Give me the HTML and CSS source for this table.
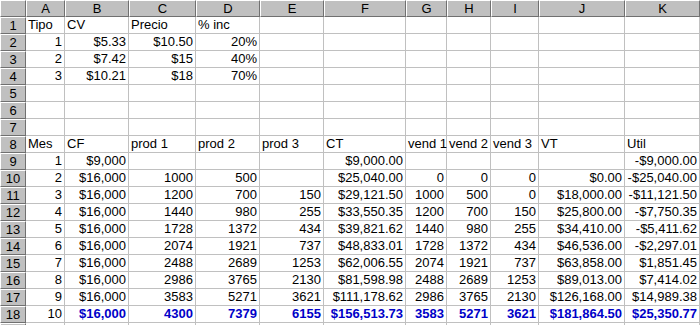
FILE: index.html
```html
<!DOCTYPE html>
<html lang="es">
<head>
<meta charset="utf-8">
<title>Hoja de cálculo</title>
<link rel="stylesheet" href="styles.css">
</head>
<body>
<div class="sheet">
  <div class="row">
    <div class="hd corner"></div><div class="hd">A</div><div class="hd">B</div><div class="hd">C</div><div class="hd">D</div><div class="hd">E</div><div class="hd">F</div><div class="hd">G</div><div class="hd">H</div><div class="hd">I</div><div class="hd">J</div><div class="hd">K</div><div class="hd"></div>
  </div>
  <div class="row">
    <div class="hd">1</div><div class="cell">Tipo</div><div class="cell">CV</div><div class="cell">Precio</div><div class="cell">% inc</div><div class="cell"></div><div class="cell"></div><div class="cell"></div><div class="cell"></div><div class="cell"></div><div class="cell"></div><div class="cell"></div><div class="cell"></div>
  </div>
  <div class="row">
    <div class="hd">2</div><div class="cell num">1</div><div class="cell num">$5.33</div><div class="cell num">$10.50</div><div class="cell num">20%</div><div class="cell"></div><div class="cell"></div><div class="cell"></div><div class="cell"></div><div class="cell"></div><div class="cell"></div><div class="cell"></div><div class="cell"></div>
  </div>
  <div class="row">
    <div class="hd">3</div><div class="cell num">2</div><div class="cell num">$7.42</div><div class="cell num">$15</div><div class="cell num">40%</div><div class="cell"></div><div class="cell"></div><div class="cell"></div><div class="cell"></div><div class="cell"></div><div class="cell"></div><div class="cell"></div><div class="cell"></div>
  </div>
  <div class="row">
    <div class="hd">4</div><div class="cell num">3</div><div class="cell num">$10.21</div><div class="cell num">$18</div><div class="cell num">70%</div><div class="cell"></div><div class="cell"></div><div class="cell"></div><div class="cell"></div><div class="cell"></div><div class="cell"></div><div class="cell"></div><div class="cell"></div>
  </div>
  <div class="row">
    <div class="hd">5</div><div class="cell"></div><div class="cell"></div><div class="cell"></div><div class="cell"></div><div class="cell"></div><div class="cell"></div><div class="cell"></div><div class="cell"></div><div class="cell"></div><div class="cell"></div><div class="cell"></div><div class="cell"></div>
  </div>
  <div class="row">
    <div class="hd">6</div><div class="cell"></div><div class="cell"></div><div class="cell"></div><div class="cell"></div><div class="cell"></div><div class="cell"></div><div class="cell"></div><div class="cell"></div><div class="cell"></div><div class="cell"></div><div class="cell"></div><div class="cell"></div>
  </div>
  <div class="row">
    <div class="hd">7</div><div class="cell"></div><div class="cell"></div><div class="cell"></div><div class="cell"></div><div class="cell"></div><div class="cell"></div><div class="cell"></div><div class="cell"></div><div class="cell"></div><div class="cell"></div><div class="cell"></div><div class="cell"></div>
  </div>
  <div class="row">
    <div class="hd">8</div><div class="cell">Mes</div><div class="cell">CF</div><div class="cell">prod 1</div><div class="cell">prod 2</div><div class="cell">prod 3</div><div class="cell">CT</div><div class="cell">vend 1</div><div class="cell">vend 2</div><div class="cell">vend 3</div><div class="cell">VT</div><div class="cell">Util</div><div class="cell"></div>
  </div>
  <div class="row">
    <div class="hd">9</div><div class="cell num">1</div><div class="cell num">$9,000</div><div class="cell"></div><div class="cell"></div><div class="cell"></div><div class="cell num">$9,000.00</div><div class="cell"></div><div class="cell"></div><div class="cell"></div><div class="cell"></div><div class="cell num">-$9,000.00</div><div class="cell"></div>
  </div>
  <div class="row">
    <div class="hd">10</div><div class="cell num">2</div><div class="cell num">$16,000</div><div class="cell num">1000</div><div class="cell num">500</div><div class="cell"></div><div class="cell num">$25,040.00</div><div class="cell num">0</div><div class="cell num">0</div><div class="cell num">0</div><div class="cell num">$0.00</div><div class="cell num">-$25,040.00</div><div class="cell"></div>
  </div>
  <div class="row">
    <div class="hd">11</div><div class="cell num">3</div><div class="cell num">$16,000</div><div class="cell num">1200</div><div class="cell num">700</div><div class="cell num">150</div><div class="cell num">$29,121.50</div><div class="cell num">1000</div><div class="cell num">500</div><div class="cell num">0</div><div class="cell num">$18,000.00</div><div class="cell num">-$11,121.50</div><div class="cell"></div>
  </div>
  <div class="row">
    <div class="hd">12</div><div class="cell num">4</div><div class="cell num">$16,000</div><div class="cell num">1440</div><div class="cell num">980</div><div class="cell num">255</div><div class="cell num">$33,550.35</div><div class="cell num">1200</div><div class="cell num">700</div><div class="cell num">150</div><div class="cell num">$25,800.00</div><div class="cell num">-$7,750.35</div><div class="cell"></div>
  </div>
  <div class="row">
    <div class="hd">13</div><div class="cell num">5</div><div class="cell num">$16,000</div><div class="cell num">1728</div><div class="cell num">1372</div><div class="cell num">434</div><div class="cell num">$39,821.62</div><div class="cell num">1440</div><div class="cell num">980</div><div class="cell num">255</div><div class="cell num">$34,410.00</div><div class="cell num">-$5,411.62</div><div class="cell"></div>
  </div>
  <div class="row">
    <div class="hd">14</div><div class="cell num">6</div><div class="cell num">$16,000</div><div class="cell num">2074</div><div class="cell num">1921</div><div class="cell num">737</div><div class="cell num">$48,833.01</div><div class="cell num">1728</div><div class="cell num">1372</div><div class="cell num">434</div><div class="cell num">$46,536.00</div><div class="cell num">-$2,297.01</div><div class="cell"></div>
  </div>
  <div class="row">
    <div class="hd">15</div><div class="cell num">7</div><div class="cell num">$16,000</div><div class="cell num">2488</div><div class="cell num">2689</div><div class="cell num">1253</div><div class="cell num">$62,006.55</div><div class="cell num">2074</div><div class="cell num">1921</div><div class="cell num">737</div><div class="cell num">$63,858.00</div><div class="cell num">$1,851.45</div><div class="cell"></div>
  </div>
  <div class="row">
    <div class="hd">16</div><div class="cell num">8</div><div class="cell num">$16,000</div><div class="cell num">2986</div><div class="cell num">3765</div><div class="cell num">2130</div><div class="cell num">$81,598.98</div><div class="cell num">2488</div><div class="cell num">2689</div><div class="cell num">1253</div><div class="cell num">$89,013.00</div><div class="cell num">$7,414.02</div><div class="cell"></div>
  </div>
  <div class="row">
    <div class="hd">17</div><div class="cell num">9</div><div class="cell num">$16,000</div><div class="cell num">3583</div><div class="cell num">5271</div><div class="cell num">3621</div><div class="cell num">$111,178.62</div><div class="cell num">2986</div><div class="cell num">3765</div><div class="cell num">2130</div><div class="cell num">$126,168.00</div><div class="cell num">$14,989.38</div><div class="cell"></div>
  </div>
  <div class="row">
    <div class="hd">18</div><div class="cell num">10</div><div class="cell num total">$16,000</div><div class="cell num total">4300</div><div class="cell num total">7379</div><div class="cell num total">6155</div><div class="cell num total">$156,513.73</div><div class="cell num total">3583</div><div class="cell num total">5271</div><div class="cell num total">3621</div><div class="cell num total">$181,864.50</div><div class="cell num total">$25,350.77</div><div class="cell"></div>
  </div>
  <div class="row">
    <div class="hd"></div><div class="cell"></div><div class="cell"></div><div class="cell"></div><div class="cell"></div><div class="cell"></div><div class="cell"></div><div class="cell"></div><div class="cell"></div><div class="cell"></div><div class="cell"></div><div class="cell"></div><div class="cell"></div>
  </div>
</div>
</body>
</html>
```

FILE: styles.css
```css
html, body {
  margin: 0;
  padding: 0;
  background: #fff;
  overflow: hidden;
}

.sheet {
  display: grid;
  grid-template-columns: 26px 39px 64px 67px 64px 64px 82px 41px 44px 48px 86px 75px 60px;
  grid-auto-rows: 17px;
  font-family: "Liberation Sans", Arial, sans-serif;
  font-size: 13px;
  line-height: 16px;
  color: #000;
}

.row {
  display: contents;
}

.cell {
  box-sizing: border-box;
  border-right: 1px solid #c0c0c0;
  border-bottom: 1px solid #c0c0c0;
  padding: 0 2px;
  white-space: nowrap;
}

.num {
  text-align: right;
}

.total {
  font-weight: bold;
  color: #0000c8;
}

.hd {
  box-sizing: border-box;
  background: #c0c0c0;
  border-top: 1px solid #fff;
  border-left: 1px solid #fff;
  border-right: 1px solid #707070;
  border-bottom: 1px solid #707070;
  text-align: center;
  line-height: 15px;
  white-space: nowrap;
  overflow: hidden;
}
```
